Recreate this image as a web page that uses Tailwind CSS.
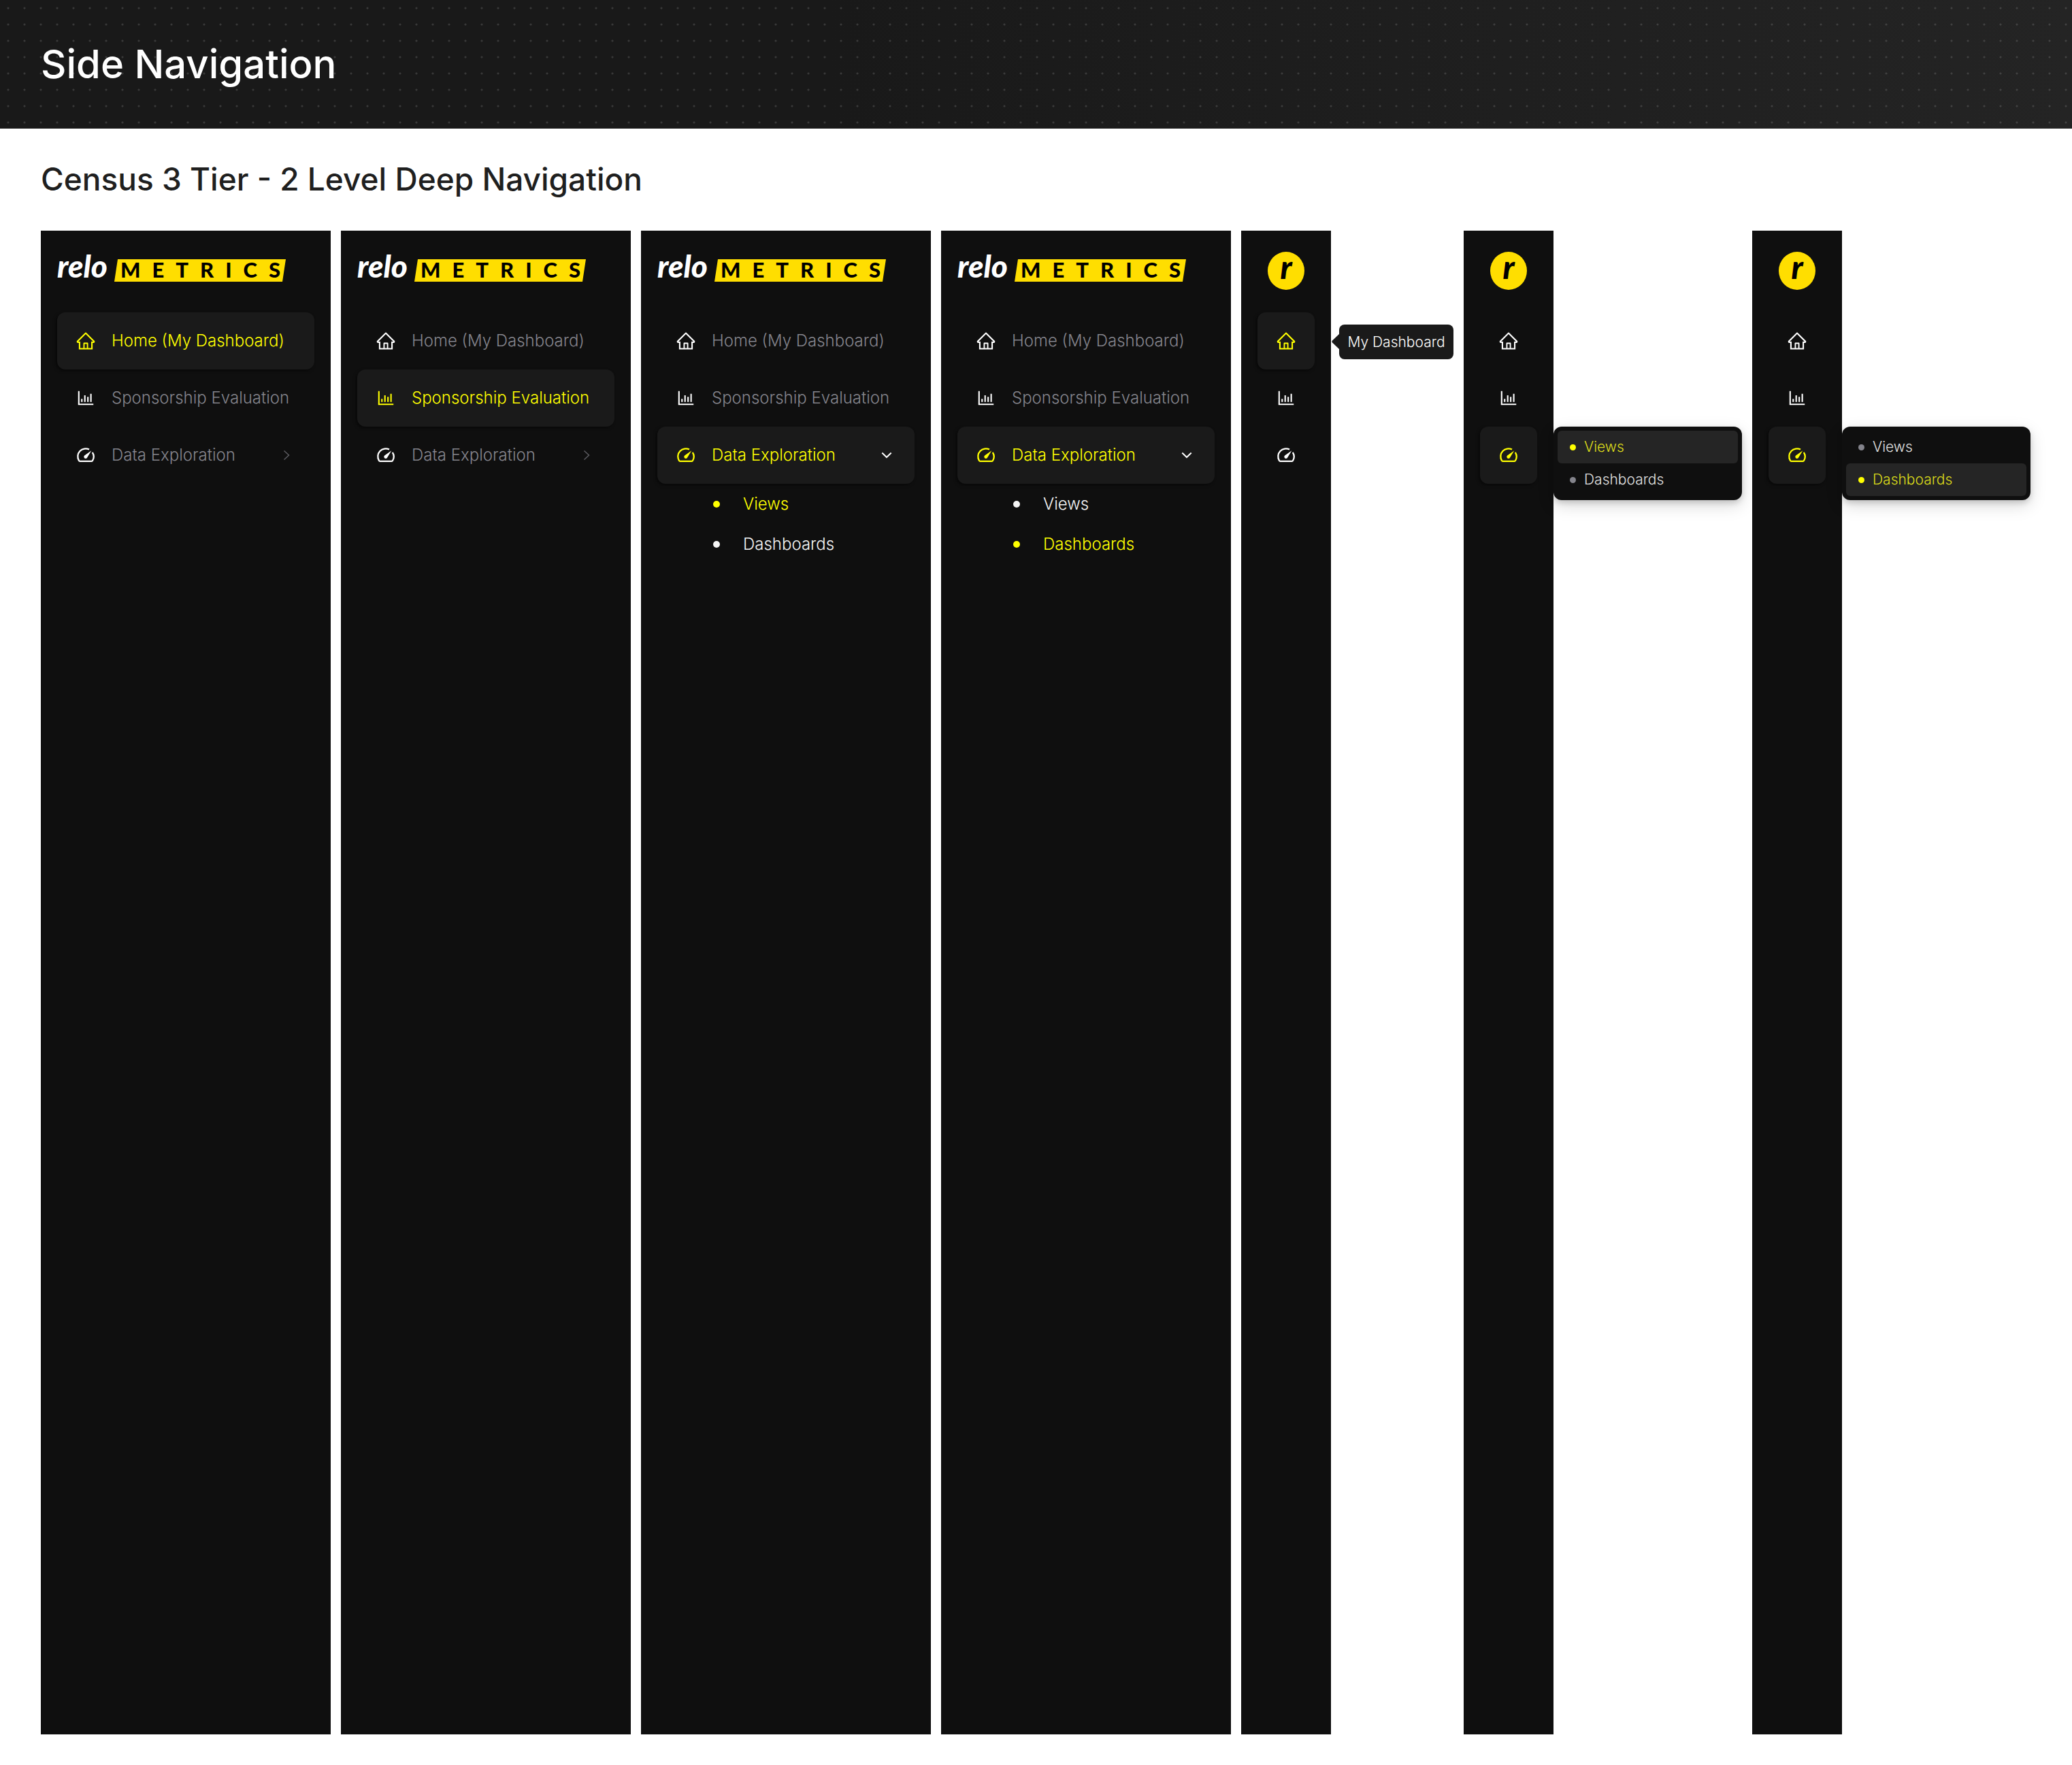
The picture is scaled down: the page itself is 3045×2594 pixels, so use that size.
<!DOCTYPE html>
<html lang="en">
<head>
<meta charset="utf-8">
<meta name="viewport" content="width=device-width, initial-scale=1">
<title>Side Navigation</title>
<script src="https://cdn.jsdelivr.net/npm/@tailwindcss/browser@4"></script>
</head>
<body class="flex min-h-screen flex-col bg-white font-['Inter',sans-serif]">

<svg class="hidden" aria-hidden="true">
  <symbol id="home" viewBox="0 0 1024 1024"><path fill="currentColor" d="M946.5 505L560.1 118.8l-25.9-25.9a31.5 31.5 0 00-44.4 0L77.5 505a63.9 63.9 0 00-18.8 46c.4 35.2 29.7 63.3 64.9 63.3h42.5V940h691.8V614.3h43.4c17.1 0 33.2-6.7 45.3-18.8a63.6 63.6 0 0018.7-45.3c0-17-6.7-33.1-18.8-45.2zM568 868H456V664h112v204zm217.9-325.7V868H632V640c0-22.1-17.9-40-40-40H432c-22.1 0-40 17.9-40 40v228H238.1V542.3h-96l370-369.7 23.1 23.1L882 542.3h-96.1z"/></symbol>
  <symbol id="chart" viewBox="0 0 1024 1024"><path fill="currentColor" d="M888 792H200V168c0-4.4-3.6-8-8-8h-56c-4.4 0-8 3.6-8 8v688c0 4.4 3.6 8 8 8h752c4.4 0 8-3.6 8-8v-56c0-4.4-3.6-8-8-8zm-600-80h56c4.4 0 8-3.6 8-8V560c0-4.4-3.6-8-8-8h-56c-4.4 0-8 3.6-8 8v144c0 4.4 3.6 8 8 8zm152 0h56c4.4 0 8-3.6 8-8V384c0-4.4-3.6-8-8-8h-56c-4.4 0-8 3.6-8 8v320c0 4.4 3.6 8 8 8zm152 0h56c4.4 0 8-3.6 8-8V462c0-4.4-3.6-8-8-8h-56c-4.4 0-8 3.6-8 8v242c0 4.4 3.6 8 8 8zm152 0h56c4.4 0 8-3.6 8-8V304c0-4.4-3.6-8-8-8h-56c-4.4 0-8 3.6-8 8v400c0 4.4 3.6 8 8 8z"/></symbol>
  <symbol id="gauge" viewBox="0 0 30 30"><path fill="none" stroke="currentColor" stroke-width="2.3" d="M20 6.5A11.6 11.6 0 0 0 4.9 22.8Q5.4 23.8 6.4 23.8H23.6Q24.6 23.8 25.1 22.8A11.6 11.6 0 0 0 24.8 10.8"/><path fill="currentColor" d="M23.3 8.2L17.1 18.4A2.5 2.5 0 1 1 13.1 15.6Z"/></symbol>
  <symbol id="right" viewBox="0 0 28 28"><path fill="none" stroke="currentColor" stroke-width="1.5" d="M10.5 7.5L17.5 14L10.5 20.5"/></symbol>
  <symbol id="down" viewBox="0 0 28 28"><path fill="none" stroke="currentColor" stroke-width="2" d="M7.3 10.5L14 17L20.7 10.5"/></symbol>
</svg>

<header class="flex h-[189px] items-center bg-[radial-gradient(circle_at_12px_12px,#ffffff22_1px,transparent_2px),linear-gradient(90deg,#191919_40%,#242424)] bg-[size:24px_24px,100%_100%] px-[60px]">
  <h1 class="text-[58px] font-medium text-white">Side Navigation</h1>
</header>

<main class="flex flex-1 flex-col px-[60px] pt-12 pb-[45px]">
  <h2 class="mb-[50px] text-[46px] leading-[52px] font-medium text-[#1f1f1f]">Census 3 Tier - 2 Level Deep Navigation</h2>

  <div class="flex flex-1 gap-[15px] text-2xl font-light">

    <!-- Expanded: home active -->
    <nav class="w-[426px] shrink-0 bg-[#0f0f0f] px-6 pt-[31px] text-[#84848c]" aria-label="Home selected">
      <a href="#" class="mb-[33px] flex h-14 items-start font-['Lato',sans-serif] font-black"><span class="w-[84px] text-[46px] leading-[42px] text-white italic">relo</span><span class="mt-[11px] h-[33px] w-[252px] bg-[#ffde00] pl-[9px] text-[31px] leading-[30px] tracking-[17px] whitespace-nowrap text-black [clip-path:polygon(5px_0,100%_0,247px_100%,0_100%)]">METRICS</span></a>
      <a href="#" class="flex h-[84px] items-center gap-[23px] rounded-xl bg-[#1a1a1a] px-[27px] text-[#ff0] shadow-[-2px_2px_4px_#00000080]"><svg class="size-[30px]"><use href="#home"/></svg>Home (My Dashboard)</a>
      <a href="#" class="flex h-[84px] items-center gap-[23px] px-[27px]"><svg class="size-[30px] text-white"><use href="#chart"/></svg>Sponsorship Evaluation</a>
      <button type="button" aria-expanded="false" class="flex h-[84px] w-full items-center gap-[23px] px-[27px]"><svg class="size-[30px] text-white"><use href="#gauge"/></svg>Data Exploration<svg class="ml-auto size-7 text-[#5c5c61]"><use href="#right"/></svg></button>
    </nav>

    <!-- Expanded: evaluation active -->
    <nav class="w-[426px] shrink-0 bg-[#0f0f0f] px-6 pt-[31px] text-[#84848c]" aria-label="Sponsorship Evaluation selected">
      <a href="#" class="mb-[33px] flex h-14 items-start font-['Lato',sans-serif] font-black"><span class="w-[84px] text-[46px] leading-[42px] text-white italic">relo</span><span class="mt-[11px] h-[33px] w-[252px] bg-[#ffde00] pl-[9px] text-[31px] leading-[30px] tracking-[17px] whitespace-nowrap text-black [clip-path:polygon(5px_0,100%_0,247px_100%,0_100%)]">METRICS</span></a>
      <a href="#" class="flex h-[84px] items-center gap-[23px] px-[27px]"><svg class="size-[30px] text-white"><use href="#home"/></svg>Home (My Dashboard)</a>
      <a href="#" class="flex h-[84px] items-center gap-[23px] rounded-xl bg-[#1a1a1a] px-[27px] text-[#ff0] shadow-[-2px_2px_4px_#00000080]"><svg class="size-[30px]"><use href="#chart"/></svg>Sponsorship Evaluation</a>
      <button type="button" aria-expanded="false" class="flex h-[84px] w-full items-center gap-[23px] px-[27px]"><svg class="size-[30px] text-white"><use href="#gauge"/></svg>Data Exploration<svg class="ml-auto size-7 text-[#5c5c61]"><use href="#right"/></svg></button>
    </nav>

    <!-- Expanded: exploration open, views active -->
    <nav class="w-[426px] shrink-0 bg-[#0f0f0f] px-6 pt-[31px] text-[#84848c]" aria-label="Views selected">
      <a href="#" class="mb-[33px] flex h-14 items-start font-['Lato',sans-serif] font-black"><span class="w-[84px] text-[46px] leading-[42px] text-white italic">relo</span><span class="mt-[11px] h-[33px] w-[252px] bg-[#ffde00] pl-[9px] text-[31px] leading-[30px] tracking-[17px] whitespace-nowrap text-black [clip-path:polygon(5px_0,100%_0,247px_100%,0_100%)]">METRICS</span></a>
      <a href="#" class="flex h-[84px] items-center gap-[23px] px-[27px]"><svg class="size-[30px] text-white"><use href="#home"/></svg>Home (My Dashboard)</a>
      <a href="#" class="flex h-[84px] items-center gap-[23px] px-[27px]"><svg class="size-[30px] text-white"><use href="#chart"/></svg>Sponsorship Evaluation</a>
      <button type="button" aria-expanded="true" class="flex h-[84px] w-full items-center gap-[23px] rounded-xl bg-[#1a1a1a] px-[27px] text-[#ff0] shadow-[-2px_2px_4px_#00000080]"><svg class="size-[30px]"><use href="#gauge"/></svg>Data Exploration<svg class="ml-auto size-7 text-white"><use href="#down"/></svg></button>
      <a href="#" class="flex h-[59px] items-center gap-[34px] pl-[82px] text-[#ff0]"><span class="size-2.5 rounded-full bg-current"></span>Views</a>
      <a href="#" class="flex h-[59px] items-center gap-[34px] pl-[82px] text-[#f5f5f5]"><span class="size-2.5 rounded-full bg-current"></span>Dashboards</a>
    </nav>

    <!-- Expanded: exploration open, dashboards active -->
    <nav class="w-[426px] shrink-0 bg-[#0f0f0f] px-6 pt-[31px] text-[#84848c]" aria-label="Dashboards selected">
      <a href="#" class="mb-[33px] flex h-14 items-start font-['Lato',sans-serif] font-black"><span class="w-[84px] text-[46px] leading-[42px] text-white italic">relo</span><span class="mt-[11px] h-[33px] w-[252px] bg-[#ffde00] pl-[9px] text-[31px] leading-[30px] tracking-[17px] whitespace-nowrap text-black [clip-path:polygon(5px_0,100%_0,247px_100%,0_100%)]">METRICS</span></a>
      <a href="#" class="flex h-[84px] items-center gap-[23px] px-[27px]"><svg class="size-[30px] text-white"><use href="#home"/></svg>Home (My Dashboard)</a>
      <a href="#" class="flex h-[84px] items-center gap-[23px] px-[27px]"><svg class="size-[30px] text-white"><use href="#chart"/></svg>Sponsorship Evaluation</a>
      <button type="button" aria-expanded="true" class="flex h-[84px] w-full items-center gap-[23px] rounded-xl bg-[#1a1a1a] px-[27px] text-[#ff0] shadow-[-2px_2px_4px_#00000080]"><svg class="size-[30px]"><use href="#gauge"/></svg>Data Exploration<svg class="ml-auto size-7 text-white"><use href="#down"/></svg></button>
      <a href="#" class="flex h-[59px] items-center gap-[34px] pl-[82px] text-[#f5f5f5]"><span class="size-2.5 rounded-full bg-current"></span>Views</a>
      <a href="#" class="flex h-[59px] items-center gap-[34px] pl-[82px] text-[#ff0]"><span class="size-2.5 rounded-full bg-current"></span>Dashboards</a>
    </nav>

    <!-- Collapsed: home active, with tooltip -->
    <div class="flex shrink-0 items-stretch">
      <nav class="flex w-[132px] flex-col bg-[#0f0f0f] px-6 pt-[31px] text-white" aria-label="Collapsed, home selected">
        <a href="#" class="mb-[33px] flex h-14 w-[54px] justify-center self-center rounded-[50%] bg-[#ffde00] font-['Lato',sans-serif] text-[48px] leading-[43px] font-black text-black italic">r</a>
        <a href="#" aria-label="My Dashboard" class="flex h-[84px] items-center justify-center rounded-xl bg-[#1a1a1a] text-[#ff0] shadow-[-2px_2px_4px_#00000080]"><svg class="size-[30px]"><use href="#home"/></svg></a>
        <a href="#" aria-label="Sponsorship Evaluation" class="flex h-[84px] items-center justify-center"><svg class="size-[30px]"><use href="#chart"/></svg></a>
        <button type="button" aria-label="Data Exploration" class="flex h-[84px] items-center justify-center"><svg class="size-[30px]"><use href="#gauge"/></svg></button>
      </nav>
      <div role="tooltip" class="relative mt-[138px] ml-3 flex h-[51px] w-[168px] items-center justify-center rounded-lg bg-[#1a1a1a] text-[21px] text-white">
        <svg class="absolute top-[13px] -left-[11px] h-6 w-3" viewBox="0 0 12 24"><path fill="#1a1a1a" d="M12 0V24L1 13.5Q-.4 12 1 10.5Z"/></svg>
        My Dashboard
      </div>
    </div>

    <!-- Collapsed: fly-out, views active -->
    <div class="flex shrink-0 items-stretch">
      <nav class="flex w-[132px] flex-col bg-[#0f0f0f] px-6 pt-[31px] text-white" aria-label="Collapsed, views selected">
        <a href="#" class="mb-[33px] flex h-14 w-[54px] justify-center self-center rounded-[50%] bg-[#ffde00] font-['Lato',sans-serif] text-[48px] leading-[43px] font-black text-black italic">r</a>
        <a href="#" aria-label="My Dashboard" class="flex h-[84px] items-center justify-center"><svg class="size-[30px]"><use href="#home"/></svg></a>
        <a href="#" aria-label="Sponsorship Evaluation" class="flex h-[84px] items-center justify-center"><svg class="size-[30px]"><use href="#chart"/></svg></a>
        <button type="button" aria-label="Data Exploration" aria-expanded="true" class="flex h-[84px] items-center justify-center rounded-xl bg-[#1a1a1a] text-[#ff0] shadow-[-2px_2px_4px_#00000080]"><svg class="size-[30px]"><use href="#gauge"/></svg></button>
      </nav>
      <div class="mt-72 w-[277px] self-start rounded-xl bg-[#0f0f0f] p-1.5 text-[21px] shadow-[0_8px_24px_#00000026,0_4px_8px_#00000026]">
        <a href="#" class="flex h-12 items-center gap-3 rounded-md bg-[#252525] px-[18px] text-[#dddd1a]"><span class="size-[9px] rounded-full bg-[#ff0]"></span>Views</a>
        <a href="#" class="flex h-12 items-center gap-3 rounded-md px-[18px] text-[#e3e3e3]"><span class="size-[9px] rounded-full bg-[#84848c]"></span>Dashboards</a>
      </div>
    </div>

    <!-- Collapsed: fly-out, dashboards active -->
    <div class="flex shrink-0 items-stretch">
      <nav class="flex w-[132px] flex-col bg-[#0f0f0f] px-6 pt-[31px] text-white" aria-label="Collapsed, dashboards selected">
        <a href="#" class="mb-[33px] flex h-14 w-[54px] justify-center self-center rounded-[50%] bg-[#ffde00] font-['Lato',sans-serif] text-[48px] leading-[43px] font-black text-black italic">r</a>
        <a href="#" aria-label="My Dashboard" class="flex h-[84px] items-center justify-center"><svg class="size-[30px]"><use href="#home"/></svg></a>
        <a href="#" aria-label="Sponsorship Evaluation" class="flex h-[84px] items-center justify-center"><svg class="size-[30px]"><use href="#chart"/></svg></a>
        <button type="button" aria-label="Data Exploration" aria-expanded="true" class="flex h-[84px] items-center justify-center rounded-xl bg-[#1a1a1a] text-[#ff0] shadow-[-2px_2px_4px_#00000080]"><svg class="size-[30px]"><use href="#gauge"/></svg></button>
      </nav>
      <div class="mt-72 w-[277px] self-start rounded-xl bg-[#0f0f0f] p-1.5 text-[21px] shadow-[0_8px_24px_#00000026,0_4px_8px_#00000026]">
        <a href="#" class="flex h-12 items-center gap-3 rounded-md px-[18px] text-[#e3e3e3]"><span class="size-[9px] rounded-full bg-[#84848c]"></span>Views</a>
        <a href="#" class="flex h-12 items-center gap-3 rounded-md bg-[#252525] px-[18px] text-[#dddd1a]"><span class="size-[9px] rounded-full bg-[#ff0]"></span>Dashboards</a>
      </div>
    </div>

  </div>
</main>
</body>
</html>
